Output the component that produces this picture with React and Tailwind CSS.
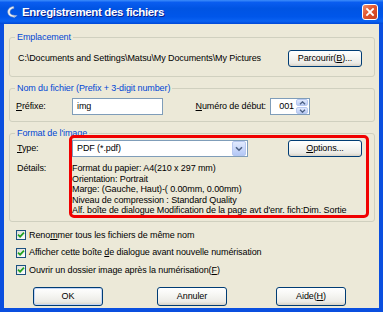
import React from "react";

const U = ({ children }) => (
  <span className="underline underline-offset-[1px] decoration-[1px]">{children}</span>
);

function XPButton({ children, className = "" }) {
  return (
    <div
      className={`flex items-center justify-center rounded-[3px] border border-[#003C74] bg-[linear-gradient(180deg,#FFFFFF_0%,#F6F6F3_40%,#ECEBE6_80%,#D8D2C6_100%)] ${className}`}
    >
      {children}
    </div>
  );
}

function Check({ children }) {
  return (
    <div className="h-[17.5px] flex items-center">
      <div className="ml-[12px] w-[10px] h-[10px] border border-[#1C5180] bg-[linear-gradient(135deg,#DCDCD7,#FFFFFF)] flex items-center justify-center">
        <svg width="8" height="8" viewBox="0 0 8 8">
          <path d="M1 3.6 L3.1 5.7 L7 1.6" stroke="#21A121" strokeWidth="1.7" fill="none" />
        </svg>
      </div>
      <span className="ml-[3px]">{children}</span>
    </div>
  );
}

export default function App() {
  return (
    <div className="w-[383px] h-[312px] flex flex-col overflow-hidden whitespace-nowrap bg-[#0A4FDF] font-['Liberation_Sans',Arial,sans-serif] text-[9px] tracking-[-0.1px] leading-[11px] text-black">
      {/* Title bar */}
      <div className="h-[24px] shrink-0 flex items-center pl-[5px] pr-[5px] bg-[linear-gradient(180deg,#3D8DFB_0%,#0A5DF0_10%,#0054E3_35%,#0056EA_70%,#0A62F2_88%,#0048D6_100%)]">
        <svg width="14" height="14" viewBox="0 0 14 14" className="shrink-0">
          <path d="M8.5 1.5 C4.5 2 2.5 4.5 2.8 7.5 C3 10 5 11.8 8 12 L9.5 12.6 L9 10.2 C6.5 10.2 5 9 4.9 7.2 C4.8 5.2 6.3 3.6 9 3.3 Z" fill="#F2F4F8" stroke="#8FA0BC" strokeWidth="0.6" />
          <path d="M9.5 12.6 L12.5 10.6 L9 10.2 Z" fill="#C8D0DE" />
        </svg>
        <span className="ml-[3px] text-white font-bold text-[11.5px] tracking-[-0.35px] leading-[14px] [text-shadow:1px_1px_0_#0A1E8A]">
          Enregistrement des fichiers
        </span>
        <div className="ml-auto w-[16px] h-[16px] rounded-[3px] border border-white bg-[linear-gradient(135deg,#F0906E_0%,#E2552E_45%,#C8401E_100%)] flex items-center justify-center">
          <svg width="10" height="10" viewBox="0 0 10 10">
            <path d="M2 2 L8 8 M8 2 L2 8" stroke="white" strokeWidth="1.8" strokeLinecap="square" />
          </svg>
        </div>
      </div>

      {/* Body */}
      <div className="flex-1 mx-[4px] mb-[4px] bg-[#ECE9D8] flex flex-col pl-[5px] pr-[4px] pt-[8px]">
        {/* Emplacement */}
        <fieldset className="border border-[#D0D0BF] rounded-[3px] px-[5px] pb-[9px]">
          <legend className="px-[2px] text-[#0046D5] leading-[11px]">Emplacement</legend>
          <div className="mt-[7px] flex items-center">
            <span className="ml-[3px]">C:\Documents and Settings\Matsu\My Documents\My Pictures</span>
            <XPButton className="ml-auto mr-[7px] w-[74px] h-[17px]">
              <span>
                Parcourir(<U>B</U>)...
              </span>
            </XPButton>
          </div>
        </fieldset>

        {/* Nom du fichier */}
        <fieldset className="mt-[6px] border border-[#D0D0BF] rounded-[3px] px-[5px] pb-[6px]">
          <legend className="px-[2px] text-[#0046D5] leading-[11px]">
            Nom du fichier (Prefix + 3-digit number)
          </legend>
          <div className="mt-[4px] flex items-center">
            <span className="ml-[1px] w-[56px]">
              <U>P</U>réfixe:
            </span>
            <div className="w-[91px] h-[17px] border border-[#7F9DB9] bg-white flex items-center pl-[4px]">img</div>
            <span className="w-[107px] pr-[4px] text-right">
              <U>N</U>uméro de début:
            </span>
            <div className="w-[40px] h-[17px] border border-[#7F9DB9] bg-white flex items-center">
              <span className="flex-1 text-right pr-[2px]">001</span>
              <div className="w-[13px] h-[15px] flex flex-col gap-[1px] pr-[1px]">
                <div className="flex-1 rounded-[2px] bg-[linear-gradient(180deg,#E1EAFE,#B9CBF3)] border border-[#B7C8F0] flex items-center justify-center">
                  <svg width="7" height="4" viewBox="0 0 7 4">
                    <path d="M1 3.2 L3.5 0.8 L6 3.2" stroke="#4D6185" strokeWidth="1.3" fill="none" />
                  </svg>
                </div>
                <div className="flex-1 rounded-[2px] bg-[linear-gradient(180deg,#E1EAFE,#B9CBF3)] border border-[#B7C8F0] flex items-center justify-center">
                  <svg width="7" height="4" viewBox="0 0 7 4">
                    <path d="M1 0.8 L3.5 3.2 L6 0.8" stroke="#4D6185" strokeWidth="1.3" fill="none" />
                  </svg>
                </div>
              </div>
            </div>
          </div>
        </fieldset>

        {/* Format de l'image */}
        <fieldset className="mt-[6px] border border-[#D0D0BF] rounded-[3px] px-[5px] pb-[5px]">
          <legend className="px-[2px] text-[#0046D5] leading-[11px]">Format de l'image</legend>
          <div className="relative mt-[1px]">
            <div className="flex items-center">
              <span className="ml-[2px] w-[55px]">
                <U>T</U>ype:
              </span>
              <div className="w-[176px] h-[17px] border border-[#7F9DB9] bg-white flex items-center">
                <span className="flex-1 pl-[4px]">PDF (*.pdf)</span>
                <div className="w-[14px] h-[15px] mr-[1px] rounded-[2px] bg-[linear-gradient(180deg,#E1EAFE,#B4C8F6)] border border-[#B7C8F0] flex items-center justify-center">
                  <svg width="8" height="6" viewBox="0 0 8 6">
                    <path d="M1 1.2 L4 4.2 L7 1.2" stroke="#4D6185" strokeWidth="1.6" fill="none" />
                  </svg>
                </div>
              </div>
              <XPButton className="ml-[40px] w-[74px] h-[17px]">
                <span>
                  <U>O</U>ptions...
                </span>
              </XPButton>
            </div>
            <div className="mt-[6px] flex">
              <span className="ml-[2px] w-[55px] leading-[10.5px]">Détails:</span>
              <div className="flex flex-col leading-[10.5px]">
                <span>Format du papier: A4(210 x 297 mm)</span>
                <span>Orientation: Portrait</span>
                <span>Marge: (Gauche, Haut)-( 0.00mm, 0.00mm)</span>
                <span>Niveau de compression : Standard Quality</span>
                <span>Alf. boîte de dialogue Modification de la page avt d'enr. fich:Dim. Sortie</span>
              </div>
            </div>
            <div className="absolute left-[54px] top-[-5px] w-[300px] h-[83px] border-[3px] border-[#F00000] rounded-[5px] pointer-events-none" />
          </div>
        </fieldset>

        {/* Checkboxes */}
        <div className="mt-[5px] flex flex-col ml-[-5px]">
          <Check>
            Reno<U>m</U>mer tous les fichiers de même nom
          </Check>
          <Check>
            Afficher cette boîte <U>d</U>e dialogue avant nouvelle numérisation
          </Check>
          <Check>
            Ouvrir un dossier image après la numérisation(<U>F</U>)
          </Check>
        </div>

        {/* Buttons */}
        <div className="mt-[7.5px] flex ml-[-5px]">
          <XPButton className="ml-[29px] w-[70px] h-[19px] shadow-[inset_0_0_0_1px_#C2D5F6]">OK</XPButton>
          <XPButton className="ml-[54px] w-[70px] h-[19px]">Annuler</XPButton>
          <XPButton className="ml-[49px] w-[70px] h-[19px]">
            <span>
              Aide(<U>H</U>)
            </span>
          </XPButton>
        </div>
      </div>
    </div>
  );
}
